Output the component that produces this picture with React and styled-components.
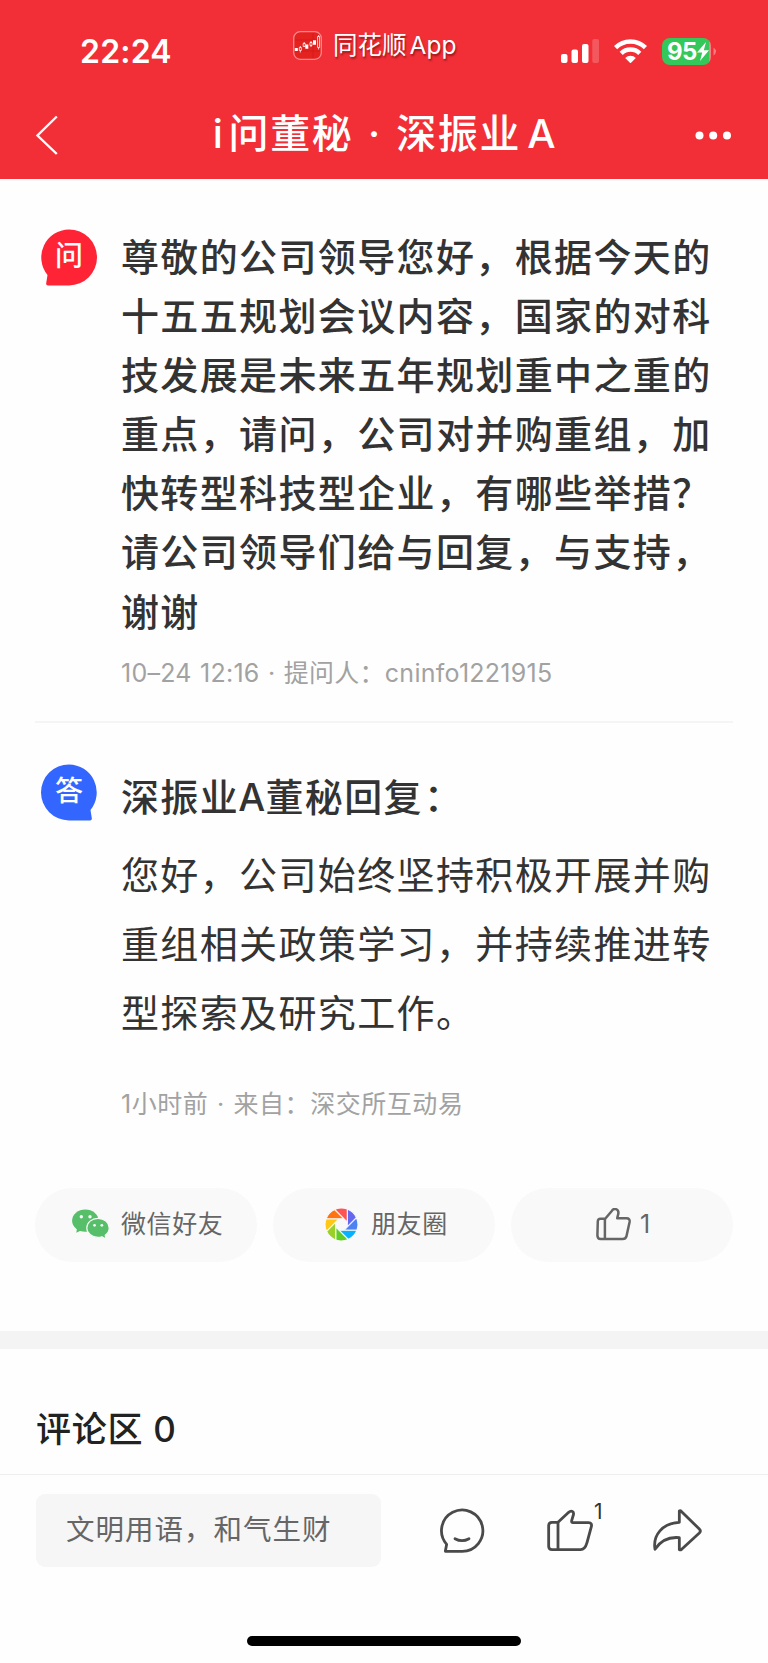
import React from "react";
import styled, { createGlobalStyle } from "styled-components";

const GlobalStyle = createGlobalStyle`
  * {
    box-sizing: border-box;
  }

  body {
    margin: 0;
    background: #fefefe;
    font-family: Inter, "Noto Sans CJK SC", sans-serif;
    color: #333;
  }

  svg {
    display: block;
    flex: none;
  }
`;

const PageStyled = styled.div`
  width: 768px;
  height: 1663px;
  display: flex;
  flex-direction: column;
  overflow: hidden;
  white-space: nowrap;
`;

const HeaderStyled = styled.header`
  height: 179px;
  flex: none;
  background: #f22f37;
  color: #fff;
`;

const StatusBarStyled = styled.div`
  height: 90px;
  display: flex;
  padding-left: 80px;

  .time {
    width: 213px;
    margin-top: 31px;
    font-size: 32px;
    line-height: 41px;
    font-weight: 600;
    letter-spacing: 0.2px;
  }

  .app {
    width: 268px;
    height: 30px;
    margin-top: 30px;
    display: flex;
    align-items: center;
    gap: 11px;
    font-size: 24.5px;
    line-height: 30px;
    text-shadow: 1px 2px 2px rgba(80, 0, 0, 0.55);
  }

  .latin {
    margin-left: 3px;
  }

  .signals {
    height: 26px;
    margin-top: 38px;
    display: flex;
    align-items: center;
  }

  .wifi {
    margin-left: 15px;
  }
`;

const BatteryStyled = styled.div`
  width: 49px;
  height: 27px;
  margin-left: 15px;
  padding-left: 5px;
  border-radius: 8px;
  display: flex;
  align-items: center;
  background: linear-gradient(to right, #34c759 47px, #f77f83 47px);
  font-size: 24px;
  font-weight: 700;
  letter-spacing: -0.6px;
`;

const NavStyled = styled.div`
  height: 89px;
  display: flex;
  align-items: center;
  padding: 1px 36px 0 35px;

  .title {
    flex: 1;
    padding-left: 16px;
    margin: -3px 0 0;
    text-align: center;
    font-size: 40px;
    line-height: 60px;
    font-weight: 500;
    letter-spacing: 1.7px;
  }

  .prefix {
    margin-right: 4px;
  }

  .dot {
    margin: 0 2px;
  }

  .suffix {
    margin-left: 6px;
  }
`;

const PostStyled = styled.section`
  display: flex;
  margin: 0 35px;
  padding: ${(props) => props.$padding};
  border-bottom: ${(props) => (props.$divided ? "2px solid #f5f5f5" : "none")};

  .avatar {
    margin: ${(props) => props.$avatarTop}px 24px 0 6px;
  }
`;

const AvatarStyled = styled.div`
  position: relative;
  width: 56px;
  height: 57px;
  flex: none;
  color: #fff;
  font-size: 28px;
  font-weight: 500;
  line-height: 54px;
  text-align: center;

  svg {
    position: absolute;
    inset: 0;
    transform: ${(props) => (props.$flip ? "scaleX(-1)" : "none")};
  }

  span {
    position: relative;
  }
`;

const TextStyled = styled.p`
  margin: ${(props) => props.$top || 0}px 0 0;
  font-size: 38px;
  letter-spacing: 1.37px;
  font-weight: ${(props) => (props.$strong ? 500 : 400)};
  line-height: ${(props) => props.$lineHeight}px;

  .line {
    display: block;
  }

  .latin {
    margin: 0 -1px;
  }

  .colon {
    margin-left: 1px;
  }
`;

const MetaStyled = styled.div`
  margin-top: ${(props) => props.$top}px;
  height: 36px;
  font-size: 25px;
  line-height: 36px;
  letter-spacing: ${(props) => props.$spacing}px;
  word-spacing: 1.1px;
  color: #a2a2a2;
`;

const ActionsStyled = styled.div`
  display: grid;
  grid-template-columns: repeat(3, 222px);
  gap: 16px;
  margin: 0 35px 69px;
`;

const ActionStyled = styled.button`
  height: 74px;
  border: 0;
  padding: 0 0 0 ${(props) => props.$left}px;
  border-radius: 37px;
  display: flex;
  align-items: center;
  gap: ${(props) => props.$gap}px;
  background: #f9f9f9;
  color: #666;
  font: inherit;
  font-size: 25px;
  line-height: 36px;
  letter-spacing: 0.6px;

  span {
    margin-top: -1px;
  }
`;

const CommentsStyled = styled.section`
  height: 144px;
  border-top: 18px solid #f4f4f4;
  border-bottom: 1px solid #eee;

  h2 {
    margin: 55px 0 0 36px;
    font-size: 35px;
    line-height: 50px;
    font-weight: 500;
    letter-spacing: 0.7px;
    color: #222;
  }
`;

const FooterStyled = styled.footer`
  display: flex;
  align-items: flex-start;
  padding: 19px 0 0 36px;
  height: 161px;

  .input {
    width: 345px;
    height: 73px;
    padding-left: 30px;
    border-radius: 9px;
    background: #f6f6f6;
    color: #666;
    font-size: 28.5px;
    line-height: 72px;
    letter-spacing: 1px;
  }

  .chat {
    margin: 14px 0 0 58px;
  }

  .like {
    margin: 15px 0 0 62px;
  }

  .count {
    width: 52px;
    margin: 8px 0 0 1px;
    font-size: 21px;
    line-height: 20px;
  }

  .share {
    margin: 15px 0 0 6px;
  }
`;

const HomeIndicatorStyled = styled.div`
  width: 274px;
  height: 10px;
  margin-left: 247px;
  border-radius: 5px;
  background: #000;
`;

const questionLines = [
  "尊敬的公司领导您好，根据今天的",
  "十五五规划会议内容，国家的对科",
  "技发展是未来五年规划重中之重的",
  "重点，请问，公司对并购重组，加",
  "快转型科技型企业，有哪些举措？",
  "请公司领导们给与回复，与支持，",
  "谢谢",
];

const replyLines = [
  "您好，公司始终坚持积极开展并购",
  "重组相关政策学习，并持续推进转",
  "型探索及研究工作。",
];

const bladeColors = [
  "#6468ee",
  "#4c82f2",
  "#06b2ff",
  "#5fcf22",
  "#9bd029",
  "#ffc814",
  "#ff7410",
  "#ff5353",
];

function AppLogo() {
  return (
    <svg width="29" height="29" viewBox="0 0 29 29" fill="none">
      <rect x="0.7" y="0.7" width="27.6" height="27.6" rx="6.5" fill="#e4221f" stroke="#f58a8e" strokeWidth="1.3" />
      <path d="M2 9h25M2 20h25M20 2v25" stroke="#cf1519" strokeWidth="0.5" />
      <path d="M1.8 17h3v3h-3zM12.3 13.5h3v4.3h-3zM20 9.3h3v4.5h-3z" fill="#fff" />
      <path d="M6.3 16.5h2v3h-2zM7.3 15v1.5M7.3 19.5v2M10.2 12.5h2v3h-2zM11.2 11v1.5M17 11.5h2v3h-2zM18 10v1.5M18 14.5v1.5M24.6 5.5h2v11h-2zM25.6 4v1.5M25.6 16.5v2" stroke="#fff" strokeWidth="0.8" />
    </svg>
  );
}

function Signal() {
  return (
    <svg width="38" height="24" viewBox="0 0 38 24" fill="#fff">
      <rect y="15" width="6.5" height="9" rx="2" />
      <rect x="10.5" y="10.5" width="6.5" height="13.5" rx="2" />
      <rect x="21" y="5" width="6.5" height="19" rx="2" />
      <rect x="31.3" width="6.7" height="24" rx="2" opacity="0.2" />
    </svg>
  );
}

function Wifi() {
  return (
    <svg className="wifi" width="33" height="24" viewBox="0 0 33 24" fill="none" stroke="#fff" strokeWidth="4.5">
      <path d="M1.6 8.7a21 21 0 0 1 29.8 0" />
      <path d="M7.2 14.4a13.2 13.2 0 0 1 18.6 0" />
      <path d="M11.2 19a7.5 7.5 0 0 1 10.6 0L16.5 24.3z" fill="#fff" stroke="none" />
    </svg>
  );
}

function Avatar({ text, color, flip }) {
  return (
    <AvatarStyled className="avatar" $flip={flip}>
      <svg width="56" height="57" viewBox="0 0 56 57" fill={color}>
        <path d="M28 0.4a28 28 0 0 1 0 56H7q-2.2 0-1.8-2.2L6.5 46A28 28 0 0 1 28 0.4z" />
      </svg>
      <span>{text}</span>
    </AvatarStyled>
  );
}

function Wechat() {
  return (
    <svg width="38" height="31" viewBox="0 0 38 31">
      <path d="M5.4 17L4.3 23.8L10.5 20.8z" fill="#57be6a" />
      <ellipse cx="13.3" cy="11.6" rx="13.2" ry="11.2" fill="#57be6a" />
      <path
        d="M26 9.4C32.2 9.4 37.2 13.6 37.2 18.9C37.2 21.8 35.7 24.4 33.2 26.2L34.1 30L29.8 27.7C28.6 28.1 27.3 28.3 26 28.3C19.8 28.3 14.8 24.1 14.8 18.9C14.8 13.6 19.8 9.4 26 9.4Z"
        fill="#57be6a"
        stroke="#f9f9f9"
        strokeWidth="1.2"
      />
      <g fill="#f9f9f9">
        <circle cx="9.3" cy="7.7" r="1.7" />
        <circle cx="18" cy="7.7" r="1.7" />
        <circle cx="22.5" cy="16.3" r="1.4" />
        <circle cx="29.8" cy="16.3" r="1.4" />
      </g>
    </svg>
  );
}

function Moments() {
  return (
    <svg width="33" height="33" viewBox="-16.5 -16.5 33 33">
      {bladeColors.map((color, index) => (
        <path
          key={color}
          d="M5.8 2.4V-15.4A16.5 16.5 0 0 1 15 -6.8z"
          transform={`rotate(${index * 45})`}
          fill={color}
          stroke="#f9f9f9"
          strokeWidth="1.1"
        />
      ))}
    </svg>
  );
}

function SmallLike() {
  return (
    <svg width="35" height="33" viewBox="0 0 35 33" fill="none" stroke="#666" strokeWidth="2.5" strokeLinejoin="round">
      <path
        d="M9.2 11.2H4.5q-2.6 0-2.7 2.6l-.4 14q0 3.8 3.2 3.8h22.2q2.8 0 3.6-2.7l3.2-14.5q.5-3.6-3-3.6h-9.4l1.2-4.9c.3-4.9-4.7-5.5-6.4-2.7z"
        transform="translate(0 -0.5)"
      />
      <path d="M8.9 11v20" />
    </svg>
  );
}

function Chat() {
  return (
    <svg className="chat" width="46" height="46" viewBox="117 141 138 138" fill="none" stroke="#4a4a4a" strokeWidth="8.4" strokeLinejoin="round" strokeLinecap="round">
      <path d="M186 271h-50l4-21a62 62 0 1 1 46 21z" />
      <path d="M165 233q21 12 42 0" />
    </svg>
  );
}

function Like() {
  return (
    <svg className="like" width="46" height="43" viewBox="440 146 138 129" fill="none" stroke="#4a4a4a" strokeWidth="8.4" strokeLinejoin="round">
      <path d="M473 186L505 156C513 149 522 154 519 164L514 181Q513 187 518 187H565Q576 187 573 199L560 247Q554 268 541 268H455Q445 268 445 258V196Q445 186 455 186Z" />
      <path d="M473 186v82" />
    </svg>
  );
}

function Share() {
  return (
    <svg className="share" width="50" height="43" viewBox="759 145 150 129" fill="none" stroke="#4a4a4a" strokeWidth="8.4" strokeLinejoin="round">
      <path d="M841 151Q844 149 848 153L901 205Q907 211 901 217L848 266Q844 269 841 267V231C808 228 786 238 768 266C761 223 790 188 841 185Z" />
    </svg>
  );
}

function App() {
  return (
    <PageStyled>
      <GlobalStyle />
      <HeaderStyled>
        <StatusBarStyled>
          <div className="time">22:24</div>
          <div className="app">
            <AppLogo />
            <div>
              同花顺<span className="latin">App</span>
            </div>
          </div>
          <div className="signals">
            <Signal />
            <Wifi />
            <BatteryStyled>
              95
              <svg width="12" height="19" viewBox="0 0 12 19" fill="#fff">
                <path d="M9 0L0 10.5h5.2L3 19 12 8.2H6.8z" />
              </svg>
            </BatteryStyled>
            <svg width="6" height="9" viewBox="0 0 6 9">
              <path d="M2.5 0.5q5 4 0 8z" fill="#f67a7f" />
            </svg>
          </div>
        </StatusBarStyled>
        <NavStyled>
          <svg width="24" height="40" viewBox="0 0 24 40" fill="none" stroke="#fff" strokeWidth="2.4">
            <path d="M21.8 1.5L2.5 20.5l19.3 18.5" />
          </svg>
          <h1 className="title">
            <span className="prefix">i</span>问董秘{" "}
            <span className="dot">·</span> 深振业
            <span className="suffix">A</span>
          </h1>
          <svg width="37" height="9" viewBox="0 0 37 9" fill="#fff">
            <circle cx="4.5" cy="4.5" r="4" />
            <circle cx="18.2" cy="4.5" r="4" />
            <circle cx="32" cy="4.5" r="4" />
          </svg>
        </NavStyled>
      </HeaderStyled>

      <PostStyled $divided $padding="49px 0 30px" $avatarTop={1}>
        <Avatar text="问" color="#fe2436" />
        <div>
          <TextStyled $strong $lineHeight={59.1}>
            {questionLines.map((line) => (
              <span className="line" key={line}>
                {line}
              </span>
            ))}
          </TextStyled>
          <MetaStyled $top={13} $spacing={0.25}>
            10–24 12:16 · 提问人：cninfo1221915
          </MetaStyled>
        </div>
      </PostStyled>

      <PostStyled $padding="41px 0 66px" $avatarTop={0}>
        <Avatar text="答" color="#3366ff" flip />
        <div>
          <TextStyled $strong $lineHeight={66}>
            深振业<span className="latin">A</span>董秘回复
            <span className="colon">：</span>
          </TextStyled>
          <TextStyled $top={11} $lineHeight={69}>
            {replyLines.map((line) => (
              <span className="line" key={line}>
                {line}
              </span>
            ))}
          </TextStyled>
          <MetaStyled $top={38} $spacing={0.55}>
            1小时前 · 来自：深交所互动易
          </MetaStyled>
        </div>
      </PostStyled>

      <ActionsStyled>
        <ActionStyled $left={37} $gap={11}>
          <Wechat />
          <span>微信好友</span>
        </ActionStyled>
        <ActionStyled $left={52} $gap={13}>
          <Moments />
          <span>朋友圈</span>
        </ActionStyled>
        <ActionStyled $left={85} $gap={9}>
          <SmallLike />
          <span>1</span>
        </ActionStyled>
      </ActionsStyled>

      <CommentsStyled>
        <h2>评论区 0</h2>
      </CommentsStyled>

      <FooterStyled>
        <div className="input">文明用语，和气生财</div>
        <Chat />
        <Like />
        <span className="count">1</span>
        <Share />
      </FooterStyled>
      <HomeIndicatorStyled />
    </PageStyled>
  );
}

export default App;
